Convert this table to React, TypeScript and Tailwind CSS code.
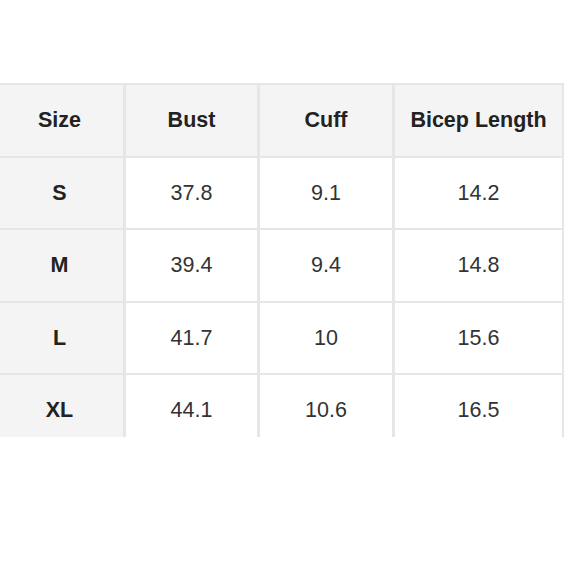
const headers = ["Size", "Bust", "Cuff", "Bicep Length"]

const rows = [
  ["S", "37.8", "9.1", "14.2"],
  ["M", "39.4", "9.4", "14.8"],
  ["L", "41.7", "10", "15.6"],
  ["XL", "44.1", "10.6", "16.5"],
]

export default function App() {
  return (
    <div className="h-[580px] w-[580px] overflow-hidden bg-white font-['Liberation_Sans',Arial,sans-serif]">
      <div className="pt-[83px]">
        <div className="-ml-[6px] h-[354px] overflow-hidden">
          <div className="grid w-[570px] grid-cols-[127px_131px_132px_167px] grid-rows-[71px_70px_71px_70px_71px] gap-x-[3px] gap-y-[2px] bg-[#e6e6e6] p-[2px]">
            {headers.map((h) => (
              <div
                key={h}
                className="flex items-center justify-center bg-[#f4f4f4] text-[21.5px] font-bold text-[#222]"
              >
                {h}
              </div>
            ))}
            {rows.map((r) =>
              r.map((cell, i) => (
                <div
                  key={r[0] + i}
                  className={
                    i === 0
                      ? "flex items-center justify-center bg-[#f4f4f4] text-[21.5px] font-bold text-[#222]"
                      : "flex items-center justify-center bg-white text-[21.5px] text-[#333]"
                  }
                >
                  {cell}
                </div>
              ))
            )}
          </div>
        </div>
      </div>
    </div>
  )
}
